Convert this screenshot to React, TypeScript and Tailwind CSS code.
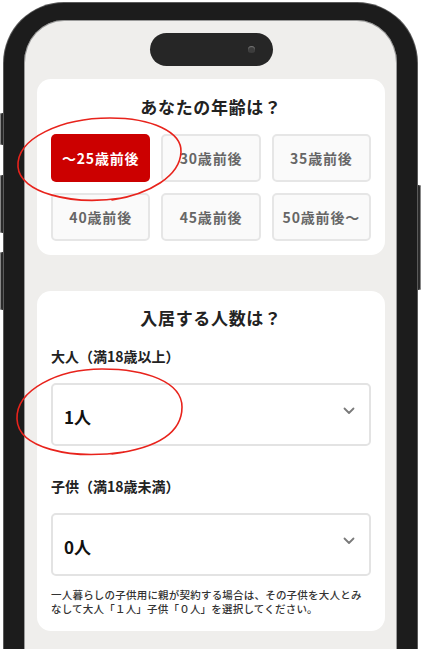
const ageOptions = ["～25歳前後", "30歳前後", "35歳前後", "40歳前後", "45歳前後", "50歳前後～"];

function Chevron() {
  return (
    <svg width="12" height="8" viewBox="0 0 12 8" fill="none">
      <path d="M1.5 1.5 L6 6 L10.5 1.5" stroke="#7a7a7a" strokeWidth="1.8" strokeLinecap="round" strokeLinejoin="round" />
    </svg>
  );
}

function SelectBox({ value }: { value: string }) {
  return (
    <div className="flex h-[63px] items-center justify-between rounded-[5px] border-2 border-[#e3e3e3] bg-white pl-[11px] pr-[14px]">
      <span className="pt-[5px] text-[17px] font-bold text-[#111]">{value}</span>
      <span className="mb-[7px]">
        <Chevron />
      </span>
    </div>
  );
}

function AgeCard() {
  return (
    <section className="rounded-[14px] bg-white px-[14px] pt-[16px] pb-[14px]">
      <h2 className="text-center text-[17px] leading-[24px] font-bold tracking-[0.04em] text-[#222]">
        あなたの年齢は？
      </h2>
      <div className="mt-[15px] grid grid-cols-3 gap-[11px]">
        {ageOptions.map((a, i) =>
          i === 0 ? (
            <div
              key={a}
              className="flex h-[48px] items-center justify-center rounded-[5px] bg-[#cc0000] text-[14px] font-bold tracking-[0.06em] text-white"
            >
              {a}
            </div>
          ) : (
            <div
              key={a}
              className="flex h-[48px] items-center justify-center rounded-[5px] border-2 border-[#e6e6e6] bg-[#fafafa] text-[14px] font-bold tracking-[0.06em] text-[#666]"
            >
              {a}
            </div>
          )
        )}
      </div>
    </section>
  );
}

function PeopleCard() {
  return (
    <section className="mt-[36px] rounded-[14px] bg-white px-[14px] pt-[15px] pb-[15px]">
      <h2 className="text-center text-[17px] leading-[24px] font-bold tracking-[0.04em] text-[#222]">
        入居する人数は？
      </h2>
      <p className="mt-[17px] text-[14px] leading-[18px] font-bold text-[#222]">大人（満18歳以上）</p>
      <div className="mt-[18px]">
        <SelectBox value="1人" />
      </div>
      <p className="mt-[31px] text-[14px] leading-[18px] font-bold text-[#222]">子供（満18歳未満）</p>
      <div className="mt-[18px]">
        <SelectBox value="0人" />
      </div>
      <p className="mt-[12px] text-[10.5px] leading-[14px] font-medium tracking-[0.02em] text-[#333]">
        一人暮らしの子供用に親が契約する場合は、その子供を大人とみ
        <br />
        なして大人「１人」子供「０人」を選択してください。
      </p>
    </section>
  );
}

export default function App() {
  return (
    <div className="relative h-[649px] w-[421px] overflow-hidden bg-white font-['Noto_Sans_CJK_JP','Noto_Sans',sans-serif]">
      {/* side buttons */}
      <div className="absolute top-[113px] left-0 h-[32px] w-[6px] rounded-l-[2px] bg-[#2a2a2a] shadow-[inset_1px_0_0_#888]" />
      <div className="absolute top-[175px] left-0 h-[58px] w-[6px] rounded-l-[2px] bg-[#2a2a2a] shadow-[inset_1px_0_0_#888]" />
      <div className="absolute top-[252px] left-0 h-[58px] w-[6px] rounded-l-[2px] bg-[#2a2a2a] shadow-[inset_1px_0_0_#888]" />
      <div className="absolute top-[185px] right-0 h-[105px] w-[6px] rounded-r-[2px] bg-[#2a2a2a] shadow-[inset_-1px_0_0_#888]" />

      {/* phone frame */}
      <div className="relative mt-[3px] ml-[4px] h-[720px] w-[413px] rounded-t-[60px] border-x-[20px] border-t-[17px] border-[#1c1c1c] bg-[#efeeec] shadow-[0_0_0_1px_#5a5a5a,inset_0_0_0_1px_#9a9a9a]">
        {/* dynamic island */}
        <div className="absolute top-[13px] left-[126px] flex h-[33px] w-[123px] items-center justify-end rounded-full bg-[#262626] pr-[18px]">
          <div className="h-[7px] w-[7px] rounded-full bg-[#3c3c3c] shadow-[inset_0_1px_1px_#777]" />
        </div>
        <div className="px-[13px] pt-[59px] pr-[12px]">
          <AgeCard />
          <PeopleCard />
        </div>
      </div>

      {/* red hand-drawn circles */}
      <svg className="pointer-events-none absolute top-0 left-0" width="421" height="649" viewBox="0 0 421 649" fill="none">
        <path
          d="M122 198 C70 206 20 192 18 167 C16 138 62 118 110 118 C152 118 182 132 181 152 C180 176 150 194 112 200"
          stroke="#e8231c"
          strokeWidth="1.6"
          strokeLinecap="round"
        />
        <path
          d="M124 452 C70 460 18 448 17 419 C16 390 58 369 102 369 C146 369 182 382 182 407 C182 432 158 448 112 454"
          stroke="#e8231c"
          strokeWidth="1.6"
          strokeLinecap="round"
        />
      </svg>
    </div>
  );
}
